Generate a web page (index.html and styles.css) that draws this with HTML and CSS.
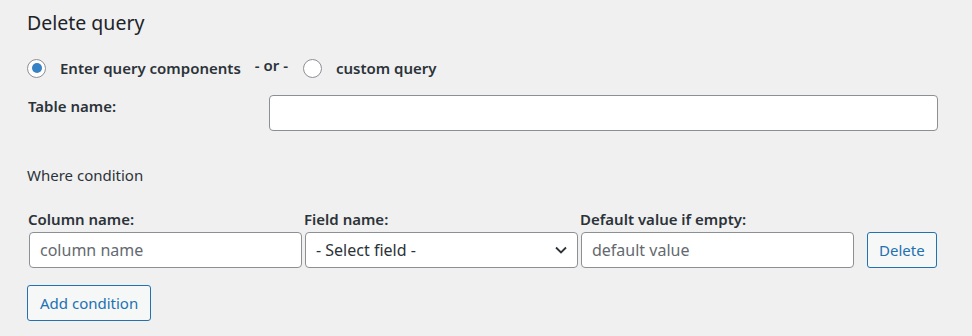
FILE: index.html
```html
<!DOCTYPE html>
<html lang="en">
<head>
    <meta charset="UTF-8">
    <title>Delete query</title>
    <link rel="stylesheet" href="styles.css">
</head>
<body>
    <div class="query-box">
        <h2>Delete query</h2>

        <!-- Tipo de query -->
        <div class="query-type">
            <label class="radio-label">
                <input type="radio" name="qtype" checked>
                <span>Enter query components</span>
            </label>
            <span class="or">- or -</span>
            <label class="radio-label">
                <input type="radio" name="qtype">
                <span>custom query</span>
            </label>
        </div>

        <div class="table-row">
            <label class="field-label">Table name:</label>
            <input type="text" class="text-input table-input">
        </div>

        <h4 class="where-title">Where condition</h4>

        <div class="cond-grid">
            <label class="field-label">Column name:</label>
            <label class="field-label">Field name:</label>
            <label class="field-label">Default value if empty:</label>
            <span></span>

            <input type="text" class="text-input" placeholder="column name">
            <div class="select-wrap">
                <select class="select-input">
                    <option>- Select field -</option>
                </select>
                <svg class="chevron" width="14" height="14" viewBox="0 0 14 14">
                    <path d="M2 4.5 L7 9.5 L12 4.5" fill="none" stroke="#2c3338" stroke-width="1.8"/>
                </svg>
            </div>
            <input type="text" class="text-input" placeholder="default value">
            <button class="btn">Delete</button>
        </div>

        <button class="btn add-btn">Add condition</button>
    </div>
</body>
</html>
```

FILE: styles.css
```css
/* Fundo cinza do admin */
body {
  font-family: "Noto Sans", "Open Sans", sans-serif;
  background-color: #f0f0f1;
  color: #1d2327;
  margin: 0;
  padding: 0;
}

.query-box {
  padding: 10px 34px 0 27px;
}

h2 {
  font-size: 19.5px;
  font-weight: 400;
  margin: 0 0 22px 0;
  line-height: 26px;
}

/* Linha dos radios */
.query-type {
  display: flex;
  align-items: center;
  height: 20px;
  margin-bottom: 17px;
}

.radio-label {
  display: flex;
  align-items: center;
  font-size: 15px;
  font-weight: 600;
  color: #2c3338;
  line-height: 20px;
}

.radio-label input {
  appearance: none;
  width: 19px;
  height: 19px;
  margin: 0 14px 0 0;
  border: 1px solid #8c8f94;
  border-radius: 50%;
  background: #fff;
  position: relative;
}

.radio-label input:checked::before {
  content: "";
  position: absolute;
  left: 3.5px;
  top: 3.5px;
  width: 10px;
  height: 10px;
  border-radius: 50%;
  background: #3582c4;
}

.or {
  font-size: 15px;
  font-weight: 600;
  color: #2c3338;
  margin: -6px 15px 0 14px;
}

.field-label {
  font-size: 15px;
  font-weight: 600;
  color: #2c3338;
  line-height: 20px;
  padding-left: 1px;
}

/* Nome da tabela */
.table-row {
  display: grid;
  grid-template-columns: 242px 1fr;
  align-items: start;
}

.table-row .field-label {
  padding-top: 1px;
}

.text-input {
  height: 36px;
  box-sizing: border-box;
  border: 1px solid #8c8f94;
  border-radius: 4px;
  background: #fff;
  font-family: inherit;
  font-size: 16px;
  padding: 0 10px;
  color: #2c3338;
  margin: 0;
}

.text-input::placeholder {
  color: #646970;
}

.table-input {
  width: 100%;
}

.where-title {
  font-size: 15px;
  font-weight: 400;
  color: #2c3338;
  margin: 34px 0 24px 0;
  line-height: 20px;
}

/* Grade das condicoes */
.cond-grid {
  display: grid;
  grid-template-columns: 273px 273px 273px auto;
  column-gap: 3px;
  row-gap: 3px;
  padding-left: 2px;
  align-items: center;
  justify-content: start;
}

.cond-grid .field-label {
  padding-left: 0;
  margin-left: -1px;
}

.select-wrap {
  position: relative;
}

.select-input {
  appearance: none;
  width: 100%;
  height: 36px;
  border: 1px solid #8c8f94;
  border-radius: 4px;
  background: #fff;
  font-family: inherit;
  font-size: 16px;
  color: #2c3338;
  padding: 0 24px 0 10px;
}

.chevron {
  position: absolute;
  right: 10px;
  top: 11px;
  pointer-events: none;
}

.btn {
  font-family: inherit;
  font-size: 15px;
  color: #2271b1;
  border: 1px solid #2271b1;
  border-radius: 3px;
  background: #f6f7f7;
  height: 36px;
  padding: 0 11px;
  margin-left: 10px;
}

.add-btn {
  margin: 17px 0 0 0;
  padding: 0 12px;
}
```
